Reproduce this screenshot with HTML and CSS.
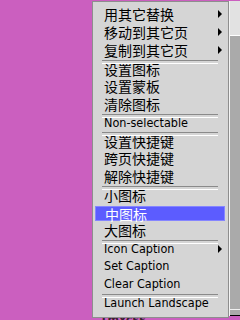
FILE: index.html
```html
<!DOCTYPE html>
<html lang="zh">
<head>
    <meta charset="UTF-8">
    <title>Menu</title>
    <link rel="stylesheet" href="styles.css">
</head>
<body>

    <!-- desktop with a window behind the menu -->
    <div class="desktop">
        <div class="window">
            <div class="window-title"></div>
            <div class="window-body"></div>
            <div class="window-foot"></div>
        </div>
        <div class="icon-label">Tmxcss</div>

        <!-- popup menu -->
        <div class="menu">
            <div class="item sub">用其它替换<span class="arrow"></span></div>
            <div class="item sub">移动到其它页<span class="arrow"></span></div>
            <div class="item sub">复制到其它页<span class="arrow"></span></div>
            <div class="item sep">设置图标</div>
            <div class="item">设置蒙板</div>
            <div class="item">清除图标</div>
            <div class="item sep latin">Non-selectable</div>
            <div class="item sep">设置快捷键</div>
            <div class="item">跨页快捷键</div>
            <div class="item">解除快捷键</div>
            <div class="item sep">小图标</div>
            <div class="item active">中图标</div>
            <div class="item">大图标</div>
            <div class="item sep latin sub">Icon Caption<span class="arrow"></span></div>
            <div class="item latin">Set Caption</div>
            <div class="item latin">Clear Caption</div>
            <div class="item sep latin">Launch Landscape</div>
        </div>
    </div>

</body>
</html>
```

FILE: styles.css
```css
* {
    margin: 0;
    padding: 0;
    box-sizing: border-box;
}

body {
    width: 240px;
    height: 320px;
    overflow: hidden;
    background-color: #cb5fbf;
    font-family: "DejaVu Sans", "Noto Sans CJK SC", sans-serif;
}

.desktop {
    position: relative;
    width: 240px;
    height: 320px;
    overflow: hidden;
}

/* Window behind the menu */
.window {
    position: absolute;
    left: 229px;
    top: 1px;
    width: 20px;
    height: 315px;
    display: flex;
    flex-direction: column;
    border-left: 1px solid #f4f4f4;
}

.window-title {
    height: 35px;
    background-color: #e2e2e2;
    border-bottom: 1px solid #ffffff;
}

.window-body {
    flex: 1;
    background-color: #aaaaaa;
    border-bottom: 1px solid #f0f0f0;
}

.window-foot {
    height: 6px;
    background-color: #aaaaaa;
    border-bottom: 1px solid #000000;
}

.icon-label {
    position: absolute;
    left: 100px;
    top: 314px;
    font-size: 11px;
    line-height: 1;
    font-weight: bold;
    color: #3a2030;
}

/* Popup menu */
.menu {
    position: absolute;
    left: 92px;
    top: 1px;
    width: 137px;
    padding: 3px 0 6px;
    background-color: #d5d5d5;
    border: 1px solid #8e8e8e;
}

.item {
    position: relative;
    display: flex;
    align-items: center;
    height: 18px;
    padding-left: 11px;
    font-family: "Noto Sans CJK SC", sans-serif;
    font-size: 14px;
    line-height: 1;
    color: #000000;
    white-space: nowrap;
}

.item.sep {
    padding-top: 2px;
}

.item.latin {
    font-family: "DejaVu Sans Condensed", "DejaVu Sans", sans-serif;
    font-size: 12.5px;
}

.item.sep::before {
    content: "";
    position: absolute;
    left: 9px;
    right: 10px;
    top: 1px;
    height: 2px;
    border-top: 1px solid #8a8a8a;
    border-bottom: 1px solid #ffffff;
}

.item.active {
    margin: 3px 3px 0 2px;
    height: 15px;
    padding-left: 9px;
    background-color: #5c5cff;
    border: 1px solid #8585ff;
    color: #ffffff;
}

.arrow {
    margin-left: auto;
    margin-right: 6px;
    width: 0;
    height: 0;
    border-left: 4px solid #000000;
    border-top: 4px solid transparent;
    border-bottom: 4px solid transparent;
}
```
